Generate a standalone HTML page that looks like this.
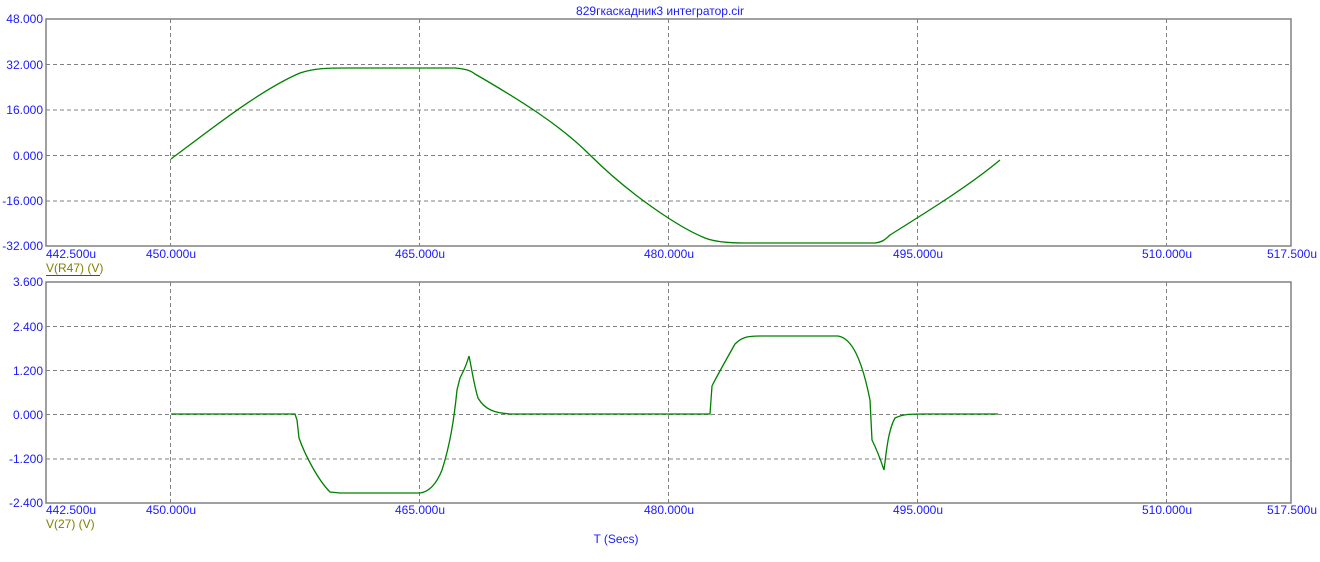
<!DOCTYPE html>
<html><head><meta charset="utf-8"><style>
body{margin:0;background:#fff;width:1320px;height:557px;overflow:hidden}
svg text{font-family:"Liberation Sans",sans-serif;font-size:12px;fill:#1a1aff}
</style></head><body>
<svg width="1320" height="557" xmlns="http://www.w3.org/2000/svg">
<g stroke="#808080" stroke-dasharray="4,3" stroke-width="1">
<path d="M46 64.5H1291M46 110H1291M46 155.5H1291M46 201H1291"/>
<path d="M46 326.5H1291M46 370.5H1291M46 414.5H1291M46 459H1291"/>
<path d="M170.5 19V246M419.5 19V246M668.5 19V246M917.5 19V246M1166.5 19V246"/>
<path d="M170.5 282V503M419.5 282V503M668.5 282V503M917.5 282V503M1166.5 282V503"/>
</g>
<g fill="none" stroke="#808080" stroke-width="1.5">
<rect x="46" y="19" width="1245" height="227"/>
<rect x="46" y="282" width="1245" height="221"/>
</g>
<path fill="none" stroke="#008000" stroke-width="1.3" d="M171 159 C210 130 260 90 300 73 C315 68 330 68 345 68 L455 68 C465 69 470 70 475 74 C520 100 560 125 590 155 C630 195 680 228 705 238 C715 242 730 243 745 243 L875 243 C882 242 885 240 890 235 C930 210 970 185 1000 160"/>
<path fill="none" stroke="#008000" stroke-width="1.3" d="M171 414 L295 414 L297 420 L299 438 C305 455 318 480 330 492 L340 493 L420 493 C428 492 436 485 442 470 C450 445 454 420 457 390 L460 378 C464 370 466 366 469 356 C472 370 474 385 478 398 C485 410 495 413 510 414 L710 414 L712 386 C718 374 726 360 735 344 C742 337 748 336 760 336 L838 336 C852 338 862 360 870 400 L872 440 C876 448 880 458 884 470 C886 455 888 430 895 418 C903 414 910 414 925 414 L998 414"/>
<g text-anchor="end">
<text x="43" y="23">48.000</text><text x="43" y="69">32.000</text><text x="43" y="114">16.000</text><text x="43" y="160">0.000</text><text x="43" y="205">-16.000</text><text x="43" y="250">-32.000</text>
<text x="43" y="286">3.600</text><text x="43" y="331">2.400</text><text x="43" y="375">1.200</text><text x="43" y="419">0.000</text><text x="43" y="463">-1.200</text><text x="43" y="507">-2.400</text>
</g>
<g>
<text x="46" y="258">442.500u</text><text x="46" y="514">442.500u</text>
</g>
<g text-anchor="middle">
<text x="171" y="258">450.000u</text><text x="420" y="258">465.000u</text><text x="669" y="258">480.000u</text><text x="918" y="258">495.000u</text><text x="1167" y="258">510.000u</text><text x="1292" y="258">517.500u</text>
<text x="171" y="514">450.000u</text><text x="420" y="514">465.000u</text><text x="669" y="514">480.000u</text><text x="918" y="514">495.000u</text><text x="1167" y="514">510.000u</text><text x="1292" y="514">517.500u</text>
<text x="660" y="15">829гкаскадник3 интегратор.cir</text>
<text x="616" y="543">T (Secs)</text>
</g>
<text x="46" y="272" style="fill:#808000">V(R47) (V)</text>
<path d="M46 275.5H100" stroke="#008000"/>
<text x="46" y="528" style="fill:#808000">V(27) (V)</text>
</svg>
</body></html>
